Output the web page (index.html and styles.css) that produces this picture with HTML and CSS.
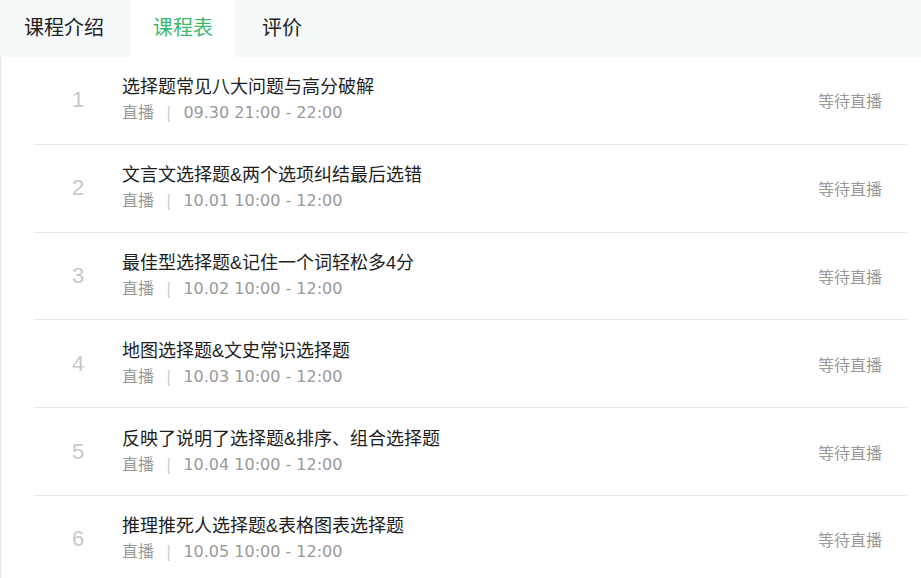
FILE: index.html
```html
<html>
  <head>
    <title>课程表</title>
    <link rel="stylesheet" href="styles.css">
  </head>
  <body>
    <div id="course-tabs">
      <div class="tab">课程介绍</div>
      <div class="tab tab_active">课程表</div>
      <div class="tab">评价</div>
    </div>
    <div id="lesson-list">
      <div class="lesson">
        <div class="lesson_num">1</div>
        <div class="lesson_info">
          <div class="lesson_title">选择题常见八大问题与高分破解</div>
          <div class="lesson_time">直播<span class="sep">|</span>09.30 21:00 - 22:00</div>
        </div>
        <div class="lesson_state">等待直播</div>
      </div>
      <div class="lesson">
        <div class="lesson_num">2</div>
        <div class="lesson_info">
          <div class="lesson_title">文言文选择题&amp;两个选项纠结最后选错</div>
          <div class="lesson_time">直播<span class="sep">|</span>10.01 10:00 - 12:00</div>
        </div>
        <div class="lesson_state">等待直播</div>
      </div>
      <div class="lesson">
        <div class="lesson_num">3</div>
        <div class="lesson_info">
          <div class="lesson_title">最佳型选择题&amp;记住一个词轻松多4分</div>
          <div class="lesson_time">直播<span class="sep">|</span>10.02 10:00 - 12:00</div>
        </div>
        <div class="lesson_state">等待直播</div>
      </div>
      <div class="lesson">
        <div class="lesson_num">4</div>
        <div class="lesson_info">
          <div class="lesson_title">地图选择题&amp;文史常识选择题</div>
          <div class="lesson_time">直播<span class="sep">|</span>10.03 10:00 - 12:00</div>
        </div>
        <div class="lesson_state">等待直播</div>
      </div>
      <div class="lesson">
        <div class="lesson_num">5</div>
        <div class="lesson_info">
          <div class="lesson_title">反映了说明了选择题&amp;排序、组合选择题</div>
          <div class="lesson_time">直播<span class="sep">|</span>10.04 10:00 - 12:00</div>
        </div>
        <div class="lesson_state">等待直播</div>
      </div>
      <div class="lesson">
        <div class="lesson_num">6</div>
        <div class="lesson_info">
          <div class="lesson_title">推理推死人选择题&amp;表格图表选择题</div>
          <div class="lesson_time">直播<span class="sep">|</span>10.05 10:00 - 12:00</div>
        </div>
        <div class="lesson_state">等待直播</div>
      </div>
    </div>
  </body>
</html>
```
FILE: styles.css
```css
body {
  margin: 0px;
  padding: 0px;
  background-color: #FFF;
  font-family: "Liberation Sans", "Noto Sans CJK SC", sans-serif;
  color: #333;
}
#course-tabs {
  display: flex;
  height: 57px;
  padding-left: 2px;
  background-color: #F5F9FA;
}
.tab {
  padding: 0px 22px;
  margin-right: 5px;
  font-size: 20px;
  line-height: 57px;
  color: #222;
}
.tab_active {
  background-color: #FFF;
  color: #3CB96A;
}
#lesson-list {
  border-left: 1px solid #E6E6E6;
  padding-left: 33px;
  padding-right: 13px;
}
.lesson {
  display: flex;
  align-items: center;
  height: 86.8px;
  border-bottom: 1px solid #E8E8E8;
}
.lesson_num {
  width: 88px;
  text-align: center;
  font-size: 22px;
  color: #C8C8C8;
}
.lesson_info {
  flex: 1;
}
.lesson_title {
  font-size: 18px;
  line-height: 25px;
  color: #1E1E1E;
}
.lesson_time {
  font-family: "DejaVu Sans", "Noto Sans CJK SC", sans-serif;
  font-size: 16px;
  line-height: 25px;
  color: #999;
}
.sep {
  color: #CCC;
  margin: 0px 12px;
}
.lesson_state {
  font-size: 16px;
  color: #999;
  padding-right: 26px;
}
```
